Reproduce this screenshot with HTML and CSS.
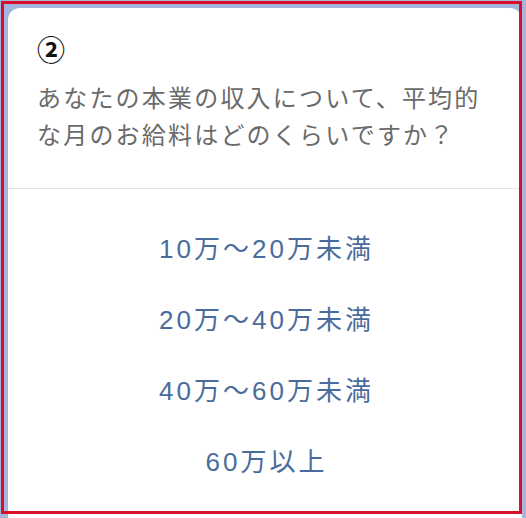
FILE: index.html
```html
<!DOCTYPE html>
<html lang="ja">
<head>
<meta charset="utf-8">
<link rel="stylesheet" href="styles.css">
</head>
<body>
<div class="card">
  <div class="head">
    <div class="num">②</div>
    <p class="question">あなたの本業の収入について、平均的な月のお給料はどのくらいですか？</p>
  </div>
  <ul class="options">
    <li>10万〜20万未満</li>
    <li>20万〜40万未満</li>
    <li>40万〜60万未満</li>
    <li>60万以上</li>
  </ul>
</div>
<div class="frame"></div>
</body>
</html>
```
FILE: styles.css
```css
html, body {
  margin: 0;
  padding: 0;
}
body {
  background: #a4b6e0;
  width: 526px;
  height: 518px;
  overflow: hidden;
  font-family: "Noto Sans CJK JP", "Noto Sans", sans-serif;
  position: relative;
}
.card {
  margin: 8px 4px 0 8px;
  background: #fff;
  border-radius: 12px;
  height: 520px;
}
.head {
  padding: 26px 29px 0 29px;
  height: 154px;
  border-bottom: 1px solid #e3e3e3;
}
.num {
  font-size: 28px;
  font-weight: 700;
  color: #111;
  line-height: 30px;
}
.question {
  margin: 14px 0 0 0;
  font-size: 24px;
  letter-spacing: 2.2px;
  line-height: 37px;
  color: #6a6a6a;
}
.options {
  list-style: none;
  margin: 0;
  padding: 42px 0 0 0;
}
.options li {
  text-align: center;
  font-family: "Liberation Sans", "Noto Sans CJK JP", sans-serif;
  font-size: 26px;
  letter-spacing: 3px;
  text-indent: 3px;
  color: #4a6c9c;
  height: 71px;
  line-height: 36px;
}
.frame {
  position: absolute;
  left: 1px;
  top: 1px;
  width: 515px;
  height: 507px;
  border: 3px solid #d8112b;
  pointer-events: none;
}
```
